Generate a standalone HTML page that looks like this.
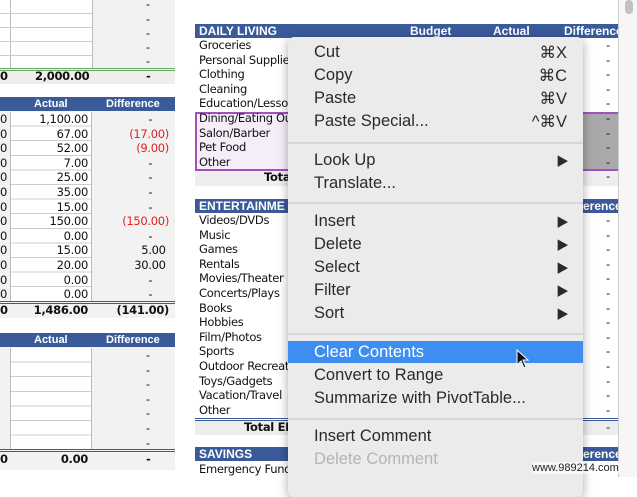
<!DOCTYPE html>
<html><head><meta charset="utf-8"><style>
*{margin:0;padding:0;box-sizing:border-box}
body{width:637px;height:477px;overflow:hidden;background:#fff;position:relative;font-family:"Liberation Sans",sans-serif;}
.a{position:absolute;white-space:nowrap}
.t{font-family:"DejaVu Sans",sans-serif;font-size:11.5px;color:#111;letter-spacing:-0.3px}
.hd{background:#3a5a9a;color:#fff;font-weight:bold;font-size:11px;height:14px;line-height:14px}
.r{text-align:right}
.red{color:#e02020}
.menu{position:absolute;left:288px;top:37px;width:295px;height:460px;background:#ecebec;border-radius:6px;box-shadow:0 2px 10px rgba(0,0,0,.35)}
.mi{position:absolute;left:26px;font-size:16.5px;color:#2a2a2a;font-family:"Liberation Sans",sans-serif}
.sc{position:absolute;right:16px;font-size:16.5px;color:#2a2a2a}
.ar{position:absolute;right:14px;font-size:15px;color:#2a2a2a;transform:scaleX(0.9)}
.sep{position:absolute;left:0;right:0;height:2px;background:#d6d5d7}
</style></head><body>

<!-- left sheet -->
<div class="a" style="left:0;top:0;width:175px;height:470px;background:#f2f2f2"></div>
<div class="a" style="left:0;top:0;width:92px;height:68px;background:#fff"></div>
<div class="a" style="left:10px;top:0;width:1px;height:68px;background:#bbb"></div>
<div class="a" style="left:92px;top:0;width:1px;height:68px;background:#bbb"></div>
<div class="a" style="left:0;top:13px;width:92px;height:1px;background:#ccc"></div>
<div class="a" style="left:0;top:27px;width:92px;height:1px;background:#ccc"></div>
<div class="a" style="left:0;top:41px;width:92px;height:1px;background:#ccc"></div>
<div class="a" style="left:0;top:55px;width:92px;height:1px;background:#ccc"></div>
<div class="a" style="left:0;top:68px;width:175px;height:3px;border-top:1px solid #6a6;border-bottom:1px solid #6a6"></div>
<div class="a" style="left:0;top:71px;width:175px;height:13px;background:#eee"></div>
<div class="a t" style="left:0;top:69px;font-weight:bold">0</div>
<div class="a t" style="left:35px;top:69px;font-weight:bold">2,000.00</div>
<div class="a t" style="left:146px;top:69px;font-weight:bold">-</div>
<div class="a t" style="left:146px;top:-3px">-</div>
<div class="a t" style="left:146px;top:12px">-</div>
<div class="a t" style="left:146px;top:26px">-</div>
<div class="a t" style="left:146px;top:40px">-</div>
<div class="a t" style="left:146px;top:54px">-</div>
<div class="a" style="left:0;top:84px;width:175px;height:13px;background:#fff"></div>

<div class="a hd" style="left:0;top:97px;width:175px"><span class="a" style="left:34px">Actual</span><span class="a" style="left:106px">Difference</span></div>
<div class="a" style="left:10px;top:112px;width:82px;height:190px;background:#fff;border-left:1px solid #bbb;border-right:1px solid #bbb;background-image:repeating-linear-gradient(#fff 0,#fff 13.6px,#ccc 13.6px,#ccc 14.6px)"></div>
<div class="a t r" style="left:0;top:112px;width:88px;line-height:14.6px">1,100.00<br>67.00<br>52.00<br>7.00<br>25.00<br>35.00<br>15.00<br>150.00<br>0.00<br>15.00<br>20.00<br>0.00<br>0.00</div>
<div class="a t" style="left:0;top:112px;line-height:14.6px">0<br>0<br>0<br>0<br>0<br>0<br>0<br>0<br>0<br>0<br>0<br>0<br>0</div>
<div class="a t r" style="left:100px;top:112px;width:69px;line-height:14.6px">-&nbsp;&nbsp;&nbsp;&nbsp;&nbsp;<br><span class="red">(17.00)</span><br><span class="red">(9.00)</span><br>-&nbsp;&nbsp;&nbsp;&nbsp;&nbsp;<br>-&nbsp;&nbsp;&nbsp;&nbsp;&nbsp;<br>-&nbsp;&nbsp;&nbsp;&nbsp;&nbsp;<br>-&nbsp;&nbsp;&nbsp;&nbsp;&nbsp;<br><span class="red">(150.00)</span><br>-&nbsp;&nbsp;&nbsp;&nbsp;&nbsp;<br>5.00&nbsp;<br>30.00&nbsp;<br>-&nbsp;&nbsp;&nbsp;&nbsp;&nbsp;<br>-&nbsp;&nbsp;&nbsp;&nbsp;&nbsp;</div>
<div class="a" style="left:0;top:301px;width:175px;height:3px;border-top:1px solid #3a5a9a;border-bottom:1px solid #3a5a9a"></div>
<div class="a t" style="left:0;top:303px;font-weight:bold">0</div>
<div class="a t r" style="left:0;top:303px;width:88px;font-weight:bold">1,486.00</div>
<div class="a t r" style="left:100px;top:303px;width:69px;font-weight:bold">(141.00)</div>
<div class="a" style="left:0;top:318px;width:175px;height:15px;background:#fff"></div>

<div class="a hd" style="left:0;top:333px;width:175px"><span class="a" style="left:34px">Actual</span><span class="a" style="left:106px">Difference</span></div>
<div class="a" style="left:10px;top:348px;width:82px;height:102px;border-left:1px solid #bbb;border-right:1px solid #bbb;background-image:repeating-linear-gradient(#fff 0,#fff 13.6px,#ccc 13.6px,#ccc 14.6px)"></div>
<div class="a t" style="left:146px;top:348px;line-height:14.6px">-<br>-<br>-<br>-<br>-<br>-<br>-</div>
<div class="a" style="left:0;top:449px;width:175px;height:3px;border-top:1px solid #3a5a9a;border-bottom:1px solid #3a5a9a"></div>
<div class="a t" style="left:0;top:452px;font-weight:bold">0</div>
<div class="a t r" style="left:0;top:452px;width:88px;font-weight:bold">0.00</div>
<div class="a t" style="left:146px;top:452px;font-weight:bold">-</div>

<!-- right sheet -->
<div class="a hd" style="left:195px;top:24px;width:423px;font-size:12px"><span class="a" style="left:4px">DAILY LIVING</span><span class="a" style="left:215px">Budget</span><span class="a" style="left:298px">Actual</span><span class="a" style="left:369px">Difference</span></div>
<div class="a" style="left:195px;top:112px;width:423px;height:59px;border-top:2px solid #a050c0;border-bottom:2px solid #a050c0;background:#f5eef8"></div>
<div class="a" style="left:195px;top:112px;width:2px;height:59px;background:#a050c0"></div>
<div class="a" style="left:583px;top:114px;width:35px;height:55px;background:#a9a9a9"></div>
<div class="a" style="left:195px;top:171px;width:423px;height:15px;background:#eee"></div>
<div class="a t" style="left:199px;top:38px;line-height:14.6px">Groceries<br>Personal Supplie<br>Clothing<br>Cleaning<br>Education/Lesso<br>Dining/Eating Ou<br>Salon/Barber<br>Pet Food<br>Other</div>
<div class="a t" style="left:264px;top:170px;font-weight:bold">Tota</div>
<div class="a t" style="left:606px;top:38px;line-height:14.6px">-<br>-<br>-<br>-<br>-<br>-<br>-<br>-<br>-<br>-</div>

<div class="a hd" style="left:195px;top:199px;width:423px;font-size:12px"><span class="a" style="left:4px">ENTERTAINME</span><span class="a" style="left:380px">fference</span></div>
<div class="a t" style="left:199px;top:213px;line-height:14.6px">Videos/DVDs<br>Music<br>Games<br>Rentals<br>Movies/Theater<br>Concerts/Plays<br>Books<br>Hobbies<br>Film/Photos<br>Sports<br>Outdoor Recreat<br>Toys/Gadgets<br>Vacation/Travel<br>Other</div>
<div class="a t" style="left:606px;top:213px;line-height:14.6px">-<br>-<br>-<br>-<br>-<br>-<br>-<br>-<br>-<br>-<br>-<br>-<br>-<br>-</div>
<div class="a" style="left:195px;top:418px;width:423px;height:3px;border-top:1px solid #3a5a9a;border-bottom:1px solid #3a5a9a"></div>
<div class="a" style="left:195px;top:421px;width:423px;height:14px;background:#eee"></div>
<div class="a t" style="left:244px;top:420px;font-weight:bold">Total EN</div>
<div class="a t" style="left:606px;top:420px">-</div>
<div class="a hd" style="left:195px;top:447px;width:423px;font-size:12px"><span class="a" style="left:4px">SAVINGS</span><span class="a" style="left:380px">fference</span></div>
<div class="a t" style="left:199px;top:462px">Emergency Fund</div>

<div class="a" style="left:618px;top:0;width:19px;height:477px;background:#f6f6f6;border-left:1px solid #ccc"></div>
<div class="a" style="left:625px;top:0;width:8px;height:14px;background:#c2c2c2;border-radius:4px"></div>

<!-- menu -->
<div class="menu">
<div class="mi" style="top:6px">Cut</div><div class="sc" style="top:6px">⌘X</div>
<div class="mi" style="top:29px">Copy</div><div class="sc" style="top:29px">⌘C</div>
<div class="mi" style="top:52px">Paste</div><div class="sc" style="top:52px">⌘V</div>
<div class="mi" style="top:75px">Paste Special...</div><div class="sc" style="top:75px">^⌘V</div>
<div class="sep" style="top:105px"></div>
<div class="mi" style="top:114px">Look Up</div><div class="ar" style="top:114px">▶</div>
<div class="mi" style="top:137px">Translate...</div>
<div class="sep" style="top:165px"></div>
<div class="mi" style="top:175px">Insert</div><div class="ar" style="top:175px">▶</div>
<div class="mi" style="top:198px">Delete</div><div class="ar" style="top:198px">▶</div>
<div class="mi" style="top:221px">Select</div><div class="ar" style="top:221px">▶</div>
<div class="mi" style="top:244px">Filter</div><div class="ar" style="top:244px">▶</div>
<div class="mi" style="top:267px">Sort</div><div class="ar" style="top:267px">▶</div>
<div class="sep" style="top:296px"></div>
<div class="a" style="left:0;top:304px;width:295px;height:22px;background:#3d8ef0"></div>
<div class="mi" style="top:306px;color:#fff">Clear Contents</div>
<div class="mi" style="top:329px">Convert to Range</div>
<div class="mi" style="top:352px">Summarize with PivotTable...</div>
<div class="sep" style="top:381px"></div>
<div class="mi" style="top:390px">Insert Comment</div>
<div class="mi" style="top:413px;color:#b5b5b5">Delete Comment</div>
<svg class="a" style="left:228px;top:312px" width="14" height="22" viewBox="0 0 14 22"><path d="M1 1 L1 16 L5 12 L8 19 L10 18 L7 11 L12 11 Z" fill="#111" stroke="#fff" stroke-width="1"/></svg>
</div>
<div class="a" style="left:532px;top:462px;font-size:11px;color:#222;background:rgba(255,255,255,.6)">www.989214.com</div>
</body></html>
